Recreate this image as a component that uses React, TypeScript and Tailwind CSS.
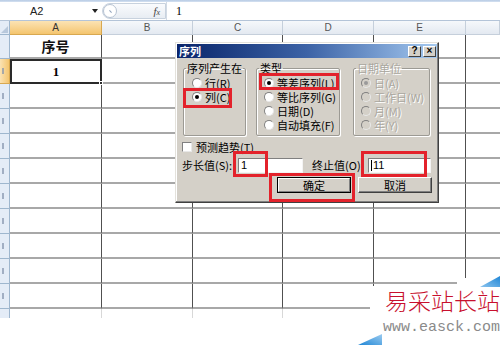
import React from 'react';

const colLetters = ['A', 'B', 'C', 'D', 'E', ''];
const colWidths = ['w-[92px]', 'w-[91px]', 'w-[90px]', 'w-[91px]', 'w-[92px]', 'w-[34px]'];

const rows = [1, 2, 3, 4, 5, 6, 7, 8, 9, 10, 11];

function Radio({ checked, disabled, children }: { checked?: boolean; disabled?: boolean; children: React.ReactNode }) {
    return (
        <div className="flex items-center h-[14px] gap-[3px]">
            <span
                className={`w-[10px] h-[10px] shrink-0 rounded-full border border-t-[#808080] border-l-[#808080] border-r-[#e8e8e8] border-b-[#e8e8e8] flex items-center justify-center ${disabled ? 'bg-[#d4d0c8]' : 'bg-white'}`}
            >
                {checked && <span className={`w-[4px] h-[4px] rounded-full ${disabled ? 'bg-[#9a9a9a]' : 'bg-black'}`} />}
            </span>
            <span className={`text-[11px] leading-[13px] whitespace-nowrap ${disabled ? 'text-[#aaa79f] [text-shadow:1px_1px_0_#fff]' : 'text-black'}`}>{children}</span>
        </div>
    );
}

function GroupBox({ title, width, disabled, children }: { title: string; width: string; disabled?: boolean; children: React.ReactNode }) {
    return (
        <fieldset className={`${width} h-[74px] border border-[#9c9a94] shadow-[1px_1px_0_#fff,inset_1px_1px_0_#fff] rounded-[2px]`}>
            <legend className={`ml-[2px] px-[1px] h-[12px] ${disabled ? 'text-[#aaa79f] [text-shadow:1px_1px_0_#fff]' : 'text-black'}`}>{title}</legend>
            {children}
        </fieldset>
    );
}

function TitleButton({ children }: { children: React.ReactNode }) {
    return (
        <div className="w-[13px] h-[11px] bg-[#d4d0c8] border border-t-white border-l-white border-r-[#404040] border-b-[#404040] flex items-center justify-center text-[10px] leading-none font-bold text-black font-['Liberation_Sans',sans-serif]">
            {children}
        </div>
    );
}

function SeriesDialog() {
    return (
        <div className="absolute left-[175px] top-[42px] w-[264px] h-[161px] bg-[#d4d0c8] border border-t-[#e4e2dc] border-l-[#e4e2dc] border-r-[#404040] border-b-[#404040] shadow-[inset_-1px_-1px_0_#808080,inset_1px_1px_0_#fff] p-[1px] flex flex-col font-['Noto_Sans_CJK_SC',sans-serif] text-[11px] leading-[12px] text-black">
            {/* Title bar */}
            <div className="h-[14px] flex items-center justify-between pl-[2px] pr-[1px] bg-gradient-to-r from-[#0a246a] via-[#3d63a6] to-[#a6caf0]">
                <span className="text-white font-bold text-[11px]">序列</span>
                <div className="flex gap-[2px]">
                    <TitleButton>?</TitleButton>
                    <TitleButton>×</TitleButton>
                </div>
            </div>

            <div className="flex-1 flex flex-col pl-[6px] pt-[4px]">
                {/* Group boxes */}
                <div className="flex">
                    <GroupBox title="序列产生在" width="w-[63px]">
                        <div className="flex flex-col pl-[8px] pt-[2px]">
                            <Radio>行(R)</Radio>
                            <Radio checked>列(C)</Radio>
                        </div>
                    </GroupBox>
                    <div className="w-[10px]" />
                    <GroupBox title="类型" width="w-[84px]">
                        <div className="flex flex-col pl-[7px] pt-[2px]">
                            <Radio checked>等差序列(L)</Radio>
                            <Radio>等比序列(G)</Radio>
                            <Radio>日期(D)</Radio>
                            <Radio>自动填充(F)</Radio>
                        </div>
                    </GroupBox>
                    <div className="w-[13px]" />
                    <GroupBox title="日期单位" width="w-[77px]" disabled>
                        <div className="flex flex-col pl-[7px] pt-[2px]">
                            <Radio checked disabled>日(A)</Radio>
                            <Radio disabled>工作日(W)</Radio>
                            <Radio disabled>月(M)</Radio>
                            <Radio disabled>年(Y)</Radio>
                        </div>
                    </GroupBox>
                </div>

                {/* Trend checkbox */}
                <div className="mt-[5px] h-[12px] flex items-center gap-[4px] -ml-[1px]">
                    <span className="w-[10px] h-[10px] bg-white border border-t-[#808080] border-l-[#808080] border-r-[#e8e8e8] border-b-[#e8e8e8]" />
                    <span>预测趋势(T)</span>
                </div>

                {/* Step / stop values */}
                <div className="mt-[4px] h-[16px] flex items-center -ml-[1px]">
                    <span className="w-[56px]">步长值(S):</span>
                    <div className="w-[65px] h-[15px] bg-white border border-t-[#808080] border-l-[#808080] border-r-[#f4f4f4] border-b-[#f4f4f4] flex items-center pl-[2px] font-['Liberation_Sans',sans-serif] text-[11px]">1</div>
                    <span className="w-[56px] ml-[9px]">终止值(O):</span>
                    <div className="w-[63px] h-[15px] bg-white border border-t-[#808080] border-l-[#808080] border-r-[#f4f4f4] border-b-[#f4f4f4] flex items-center pl-[2px] font-['Liberation_Sans',sans-serif] text-[11px]">
                        <span className="w-px h-[11px] bg-black mr-[1px]" />11
                    </div>
                </div>

                {/* Buttons */}
                <div className="mt-[4px] h-[16px] flex gap-[7px] ml-[94px]">
                    <div className="w-[74px] h-[16px] border border-black flex">
                        <div className="flex-1 bg-[#d4d0c8] border border-t-white border-l-white border-r-[#808080] border-b-[#808080] flex items-center justify-center">确定</div>
                    </div>
                    <div className="w-[74px] h-[16px] bg-[#d4d0c8] border border-t-white border-l-white border-r-[#404040] border-b-[#404040] shadow-[inset_-1px_-1px_0_#808080] flex items-center justify-center">取消</div>
                </div>
            </div>
        </div>
    );
}

export default function App() {
    return (
        <div className="relative w-[500px] h-[345px] overflow-hidden bg-white font-['Liberation_Sans','Noto_Sans_CJK_SC',sans-serif] text-[11px] text-black">
            {/* Formula bar */}
            <div className="h-[21px] flex flex-col">
                <div className="h-[3px] bg-gradient-to-b from-[#b7cbe4] to-[#d6e2f1]" />
                <div className="flex-1 flex items-center bg-white border-b border-[#b4c4d8]">
                    <div className="w-[102px] h-full flex items-center justify-between pl-[30px] pr-[4px]">
                        <span className="text-[11px] text-[#222]">A2</span>
                        <svg width="6" height="4" viewBox="0 0 6 4"><path d="M0 0 L6 0 L3 4 Z" fill="#222" /></svg>
                    </div>
                    <div className="w-[64px] h-[16px] flex items-center justify-between border border-[#c8d2de] rounded-l-full bg-gradient-to-b from-[#fafbfd] to-[#e8edf3] pr-[5px]">
                        <span className="w-[14px] h-[14px] rounded-full border border-[#b6c2d2] bg-white flex items-center justify-center">
                            <span className="w-[3px] h-[1px] bg-[#8fa2bb] rotate-45" />
                        </span>
                        <span className="font-['Liberation_Serif',serif] italic text-[11px] text-[#444]">f<span className="text-[8px]">x</span></span>
                    </div>
                    <div className="w-px h-full bg-[#d2dae4]" />
                    <span className="ml-[9px] text-[12px] font-['Liberation_Serif',serif]">1</span>
                </div>
            </div>

            {/* Column headers */}
            <div className="h-[14px] flex">
                <div className="w-[10px] h-full bg-[#e4ecf7] border-r border-b border-[#9eb6ce] relative overflow-hidden">
                    <svg className="absolute right-[1px] bottom-[1px]" width="7" height="7" viewBox="0 0 7 7"><path d="M7 0 L7 7 L0 7 Z" fill="#b8c8dc" /></svg>
                </div>
                {colLetters.map((l, i) => (
                    <div
                        key={i}
                        className={`${colWidths[i]} h-full flex items-center justify-center border-r border-b text-[10px] ${i === 0 ? 'bg-gradient-to-b from-[#fbe3b3] to-[#f4c56e] border-[#d8a850] text-[#333]' : 'bg-gradient-to-b from-[#f6f8fb] to-[#e3e9f1] border-[#c5cfdb] text-[#555]'}`}
                    >
                        {l}
                    </div>
                ))}
            </div>

            {/* Row 1 */}
            <div className="h-[24px] flex">
                <div className="w-[10px] h-full bg-[#e4ecf7] border-r border-b border-[#9eb6ce] overflow-hidden" />
                {colWidths.map((w, i) => (
                    <div
                        key={i}
                        className={`${w} h-full flex items-center justify-center border-b-2 border-b-[#a8a8a8] ${i < 5 ? 'border-r border-r-[#505050]' : ''}`}
                    >
                        {i === 0 && <span className="font-['Noto_Sans_CJK_SC',sans-serif] font-bold text-[14px] text-[#111]">序号</span>}
                    </div>
                ))}
            </div>

            {/* Rows 2-11 */}
            {rows.slice(1).map((n) => (
                <div key={n} className="h-[25px] flex">
                    <div
                        className={`w-[10px] h-full border-r border-b overflow-hidden relative ${n === 2 ? 'bg-gradient-to-r from-[#fbe3b3] to-[#f4c56e] border-[#d8a850]' : 'bg-[#e4ecf7] border-[#9eb6ce]'}`}
                    >
                        <span className="absolute left-[1px] top-[9px] w-[3px] h-[6px] border-r-2 border-[#8494ac] opacity-70" />
                    </div>
                    {colWidths.map((w, i) =>
                        n === 2 && i === 0 ? (
                            <div key={i} className={`${w} h-full relative border-2 border-[#2a2a2a] flex items-center justify-center`}>
                                <span className="font-['Liberation_Serif',serif] font-bold text-[13px]">1</span>
                                <span className="absolute -right-[3px] -bottom-[3px] w-[4px] h-[4px] bg-[#2a2a2a] border border-white" />
                            </div>
                        ) : (
                            <div
                                key={i}
                                className={`${w} h-full border-b-2 border-b-[#a8a8a8] ${i < 5 ? 'border-r border-r-[#505050]' : ''}`}
                            />
                        )
                    )}
                </div>
            ))}

            {/* Row 12 (cut off) */}
            <div className="h-[9px] flex">
                <div className="w-[10px] h-full bg-[#e4ecf7] border-r border-[#9eb6ce]" />
                {colWidths.map((w, i) => (
                    <div key={i} className={`${w} h-full ${i < 5 ? 'border-r border-r-[#d8d8d8]' : ''}`} />
                ))}
            </div>

            <SeriesDialog />

            {/* Red annotation boxes */}
            <div className="absolute left-[183px] top-[88px] w-[49px] h-[20px] border-[3px] border-[#e3222b]" />
            <div className="absolute left-[259px] top-[73px] w-[80px] h-[17px] border-[3px] border-[#e3222b]" />
            <div className="absolute left-[233px] top-[151px] w-[35px] h-[26px] border-[3px] border-[#e3222b]" />
            <div className="absolute left-[361px] top-[151px] w-[66px] h-[26px] border-[3px] border-[#e3222b]" />
            <div className="absolute left-[269px] top-[173px] w-[86px] h-[29px] border-[3px] border-[#e3222b]" />

            {/* Watermark */}
            <div className="absolute left-[370px] top-[286px] w-[130px] h-[59px] bg-white flex flex-col pl-[15px] pt-[1px]">
                <span className="text-[23px] leading-[26px] font-light text-[#c8102e] font-['Noto_Sans_CJK_SC',serif]">易采站长站</span>
                <span className="mt-[7px] -ml-[2px] text-[15px] leading-[15px] text-[#8a8a8a] font-['Liberation_Mono',monospace]">www.easck.com</span>
            </div>
            <div className="absolute left-[457px] top-[278px] w-[43px] h-[9px] bg-white" />
            <svg className="absolute left-[480px] top-[276px]" width="20" height="11" viewBox="0 0 20 11">
                <defs>
                    <linearGradient id="wmA" x1="0" y1="1" x2="1" y2="0">
                        <stop offset="0" stopColor="#8cc4ee" />
                        <stop offset="1" stopColor="#1f86d6" />
                    </linearGradient>
                </defs>
                <path d="M0 11 L20 0 L20 11 Z" fill="url(#wmA)" />
            </svg>
            <svg className="absolute left-[358px] top-[334px]" width="24" height="11" viewBox="0 0 24 11">
                <defs>
                    <linearGradient id="wmB" x1="0" y1="1" x2="1" y2="0">
                        <stop offset="0" stopColor="#1f86d6" />
                        <stop offset="1" stopColor="#9cccf0" />
                    </linearGradient>
                </defs>
                <path d="M0 11 L24 0 L24 11 Z" fill="url(#wmB)" />
            </svg>
        </div>
    );
}
